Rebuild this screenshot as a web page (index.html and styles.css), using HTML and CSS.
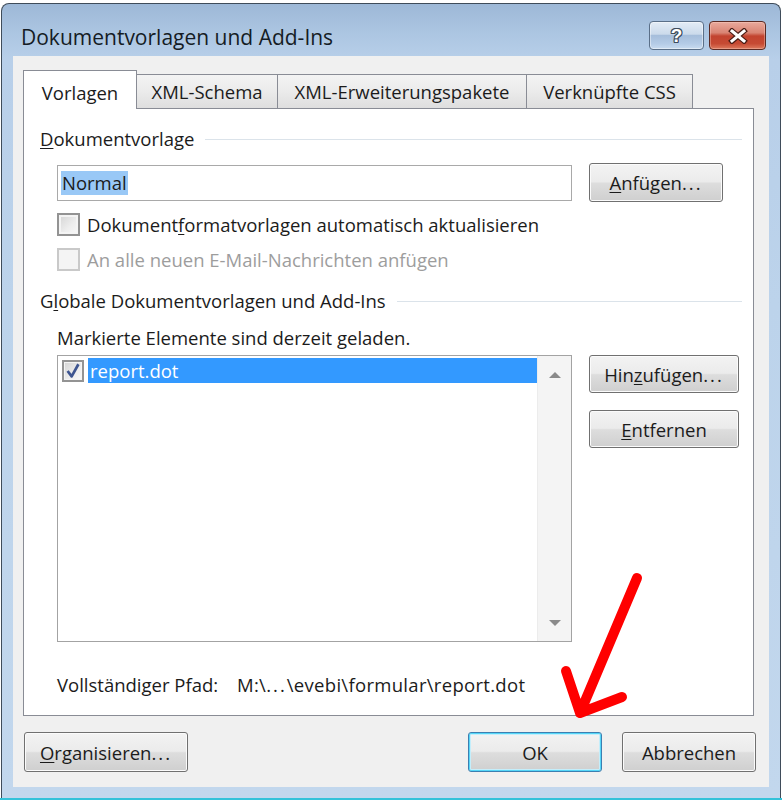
FILE: index.html
```html
<!DOCTYPE html>
<html lang="de">
<head>
<meta charset="utf-8">
<title>Dokumentvorlagen und Add-Ins</title>
<link rel="stylesheet" href="styles.css">
</head>
<body>
<div class="window">
  <div class="titlebar">
    <div class="title">Dokumentvorlagen und Add-Ins</div>
    <div class="caption-buttons">
      <div class="cap-btn help"><span class="help-glyph">?</span></div>
      <div class="cap-btn close">
        <svg width="22" height="16" viewBox="0 0 22 16">
          <path d="M5 3 L17 13 M17 3 L5 13" stroke="#4a1d16" stroke-width="5.5" stroke-linecap="square" fill="none"/>
          <path d="M5 3 L17 13 M17 3 L5 13" stroke="#ffffff" stroke-width="3" stroke-linecap="square" fill="none"/>
        </svg>
      </div>
    </div>
  </div>
  <div class="client">
    <div class="tabs">
      <div class="tab active t1">Vorlagen</div>
      <div class="tab t2">XML-Schema</div>
      <div class="tab t3">XML-Erweiterungspakete</div>
      <div class="tab t4">Verknüpfte CSS</div>
    </div>
    <div class="panel">
      <div class="group-title"><span><u>D</u>okumentvorlage</span><div class="rule"></div></div>
      <div class="template-row">
        <div class="textbox"><span class="sel">Normal</span></div>
        <button class="btn btn-attach"><u>A</u>nfügen<span class="dots">...</span></button>
      </div>
      <div class="check-row r1"><span class="cb"></span><span>Dokument<u>f</u>ormatvorlagen automatisch aktualisieren</span></div>
      <div class="check-row r2 disabled"><span class="cb"></span><span>An alle neuen E-Mail-Nachrichten anfügen</span></div>
      <div class="group-title g2"><span>G<u>l</u>obale Dokumentvorlagen und Add-Ins</span><div class="rule"></div></div>
      <div class="note">Markierte Elemente sind derzeit geladen.</div>
      <div class="list-row">
        <div class="listbox">
          <div class="list-items">
            <div class="item">
              <span class="cb small checked">
                <svg width="20" height="20" viewBox="0 0 20 20"><path d="M4 10 L8.5 16 L16 2.5" stroke="#3e5590" stroke-width="3" fill="none" stroke-linejoin="round"/></svg>
              </span>
              <span class="item-label">report.dot</span>
            </div>
          </div>
          <div class="scrollbar"><span class="sarrow up"></span><span class="sarrow down"></span></div>
        </div>
        <div class="side-buttons">
          <button class="btn btn-side">Hin<u>z</u>ufügen<span class="dots">...</span></button>
          <button class="btn btn-side"><u>E</u>ntfernen</button>
        </div>
      </div>
      <div class="path"><span class="path-label">Vollständiger Pfad:</span><span class="path-value">M:\<span class="dots">...</span>\evebi\formular\report.dot</span></div>
    </div>
    <div class="footer">
      <button class="btn btn-foot btn-org"><u>O</u>rganisieren<span class="dots">...</span></button>
      <div class="footer-right">
        <button class="btn btn-foot default">OK</button>
        <button class="btn btn-foot">Abbrechen</button>
      </div>
    </div>
  </div>
</div>
<div class="screen-edge"></div>
<svg class="arrow-mark" width="782" height="800" viewBox="0 0 782 800">
  <path d="M637 578 L580 713 M566 671 L580 713 L622 697" stroke="#ff0000" stroke-width="10" stroke-linecap="round" stroke-linejoin="round" fill="none"/>
</svg>
</body>
</html>
```

FILE: styles.css
```css
* { box-sizing: border-box; }

html, body {
  margin: 0;
  padding: 0;
}

body {
  width: 782px;
  height: 800px;
  overflow: hidden;
  position: relative;
  background: #ffffff;
  font-family: "Open Sans", "Noto Sans", sans-serif;
  font-size: 18.5px;
  color: #1b1b1b;
}

u { text-decoration: underline; text-underline-offset: 2px; }

.dots { letter-spacing: 2px; }

.window {
  margin: 3px 0 0 1px;
  width: 780px;
  height: 795px;
  border: 1px solid #3f4c5a;
  border-bottom: none;
  border-radius: 8px 8px 0 0;
  background: linear-gradient(to bottom, #9db8d7 0px, #acc6e2 30px, #b8cfe9 55px, #bcd3eb 300px, #c2d7ed 100%);
  padding: 0 11px;
}

.titlebar {
  height: 52px;
  display: flex;
  justify-content: space-between;
  align-items: flex-start;
  padding: 0 3px 0 8px;
}

.title {
  font-size: 21px;
  line-height: 28px;
  margin-top: 19px;
  color: #151c24;
}

.caption-buttons {
  display: flex;
  gap: 5px;
  margin-top: 17px;
}

.cap-btn {
  height: 29px;
  border-radius: 4px;
  display: flex;
  align-items: center;
  justify-content: center;
}

.help {
  width: 55px;
  border: 1px solid #5a6f88;
  background: linear-gradient(to bottom, #e3ecf6 0%, #cbdaeb 45%, #a6bedb 50%, #b4cbe6 80%, #c9dcf0 100%);
  box-shadow: inset 0 0 0 1px rgba(255,255,255,0.45);
}

.help-glyph {
  font-family: "Liberation Sans", sans-serif;
  font-weight: bold;
  font-size: 19px;
  line-height: 20px;
  color: #ffffff;
  text-shadow: 1px 0 0 #3d4b5c, -1px 0 0 #3d4b5c, 0 1px 0 #3d4b5c, 0 -1px 0 #3d4b5c, 1px 1px 0 #3d4b5c, -1px -1px 0 #3d4b5c, 1px -1px 0 #3d4b5c, -1px 1px 0 #3d4b5c;
}

.close {
  width: 57px;
  border: 1px solid #5b2a23;
  background: linear-gradient(to bottom, #e9a99c 0%, #d98473 40%, #c2432f 52%, #c64a33 80%, #dd7a5e 100%);
  box-shadow: inset 0 0 0 1px rgba(255,220,210,0.35);
}

.client {
  height: 731px;
  background: #f0f0f0;
  padding: 14px 15px 0 10px;
}

.tabs {
  display: flex;
  height: 38px;
  position: relative;
  z-index: 2;
}

.tab {
  height: 34px;
  margin-top: 4px;
  border: 1px solid #898c95;
  border-bottom: none;
  background: linear-gradient(to bottom, #f3f3f3 0%, #ebebeb 50%, #dedede 100%);
  text-align: center;
  line-height: 34px;
  white-space: nowrap;
  margin-left: -1px;
}

.tab.t1 { width: 114px; margin-left: 0; }
.tab.t2 { width: 142px; }
.tab.t3 { width: 250px; }
.tab.t4 { width: 167px; }

.tab.active {
  height: 39px;
  margin-top: 0;
  background: #ffffff;
  line-height: 44px;
  position: relative;
  z-index: 3;
}

.panel {
  width: 731px;
  height: 608px;
  border: 1px solid #898c95;
  background: #ffffff;
  padding: 18px 11px 0 16px;
}

.group-title {
  display: flex;
  align-items: center;
  height: 24px;
  line-height: 24px;
  white-space: nowrap;
}

.group-title .rule {
  flex: 1;
  height: 1px;
  background: #dbe3ea;
  margin-left: 11px;
}

.group-title.g2 { margin-top: 18px; }

.template-row {
  display: flex;
  align-items: center;
  gap: 17px;
  height: 39px;
  margin: 12px 0 0 17px;
}

.textbox {
  width: 515px;
  height: 36px;
  border: 1px solid #a9a9a9;
  background: #ffffff;
  display: flex;
  align-items: center;
  padding-left: 3px;
}

.sel {
  background: #99c8f6;
  height: 24px;
  line-height: 24px;
  padding: 0 1px;
}

.btn {
  font-family: inherit;
  font-size: 18.5px;
  color: #1b1b1b;
  border: 1px solid #707070;
  border-radius: 3px;
  background: linear-gradient(to bottom, #f3f3f3 0%, #ebebeb 48%, #dddddd 52%, #cfcfcf 100%);
  box-shadow: inset 0 0 0 1px #fbfbfb;
  padding: 0;
  margin: 0;
  white-space: nowrap;
}

.btn-attach { width: 134px; height: 39px; }

.check-row {
  display: flex;
  align-items: center;
  gap: 7px;
  height: 24px;
  margin-left: 17px;
  white-space: nowrap;
}

.check-row.r1 { margin-top: 10px; }
.check-row.r2 { margin-top: 11px; }

.cb {
  width: 23px;
  height: 23px;
  border: 2px solid #939393;
  background: linear-gradient(135deg, #d4d4d4 0%, #eeeeee 60%, #f8f8f8 100%);
  box-shadow: inset 0 0 0 2px #f4f4f4;
  flex: none;
}

.disabled { color: #9d9d9d; }
.disabled .cb {
  border-color: #c9c9c9;
  background: #f4f4f4;
  box-shadow: none;
}

.note {
  margin: 13px 0 0 17px;
  height: 24px;
  line-height: 24px;
}

.list-row {
  display: flex;
  gap: 17px;
  margin: 5px 0 0 17px;
}

.listbox {
  width: 515px;
  height: 287px;
  border: 1px solid #a3a3a3;
  background: #ffffff;
  display: flex;
}

.list-items {
  flex: 1;
  padding: 2px 0 0 4px;
}

.item {
  display: flex;
  align-items: center;
  height: 25px;
}

.cb.small {
  width: 22px;
  height: 22px;
  display: flex;
  align-items: center;
  justify-content: center;
  box-shadow: inset 0 0 0 1px #f4f4f4;
}

.item-label {
  flex: 1;
  height: 25px;
  line-height: 25px;
  margin-left: 4px;
  padding-left: 2px;
  background: #3399ff;
  color: #ffffff;
}

.scrollbar {
  width: 34px;
  background: #f4f4f4;
  border-left: 1px solid #ececec;
  display: flex;
  flex-direction: column;
  justify-content: space-between;
  align-items: center;
  padding: 16px 0 15px;
}

.sarrow {
  width: 0;
  height: 0;
  border-left: 6px solid transparent;
  border-right: 6px solid transparent;
}

.sarrow.up { border-bottom: 6px solid #8a8a8a; }
.sarrow.down { border-top: 6px solid #8a8a8a; }

.side-buttons {
  display: flex;
  flex-direction: column;
  gap: 17px;
}

.btn-side { width: 150px; height: 38px; }

.path {
  margin: 31px 0 0 17px;
  height: 24px;
  line-height: 24px;
  white-space: nowrap;
}

.path-label {
  display: inline-block;
  width: 180px;
}

.path-value { letter-spacing: 0.3px; }

.footer {
  display: flex;
  justify-content: space-between;
  margin: 16px -2px 0 1px;
}

.footer-right {
  display: flex;
  gap: 20px;
}

.btn-foot { width: 134px; height: 40px; }
.btn-org { width: 164px; }

.btn.default {
  border-color: #3c7fb1;
  box-shadow: inset 0 0 0 1px #54d6f8, inset 0 0 0 2px #c4eefb;
}

.screen-edge {
  height: 2px;
  background: #33c2d9;
}

.arrow-mark {
  position: absolute;
  left: 0;
  top: 0;
  pointer-events: none;
}
```
